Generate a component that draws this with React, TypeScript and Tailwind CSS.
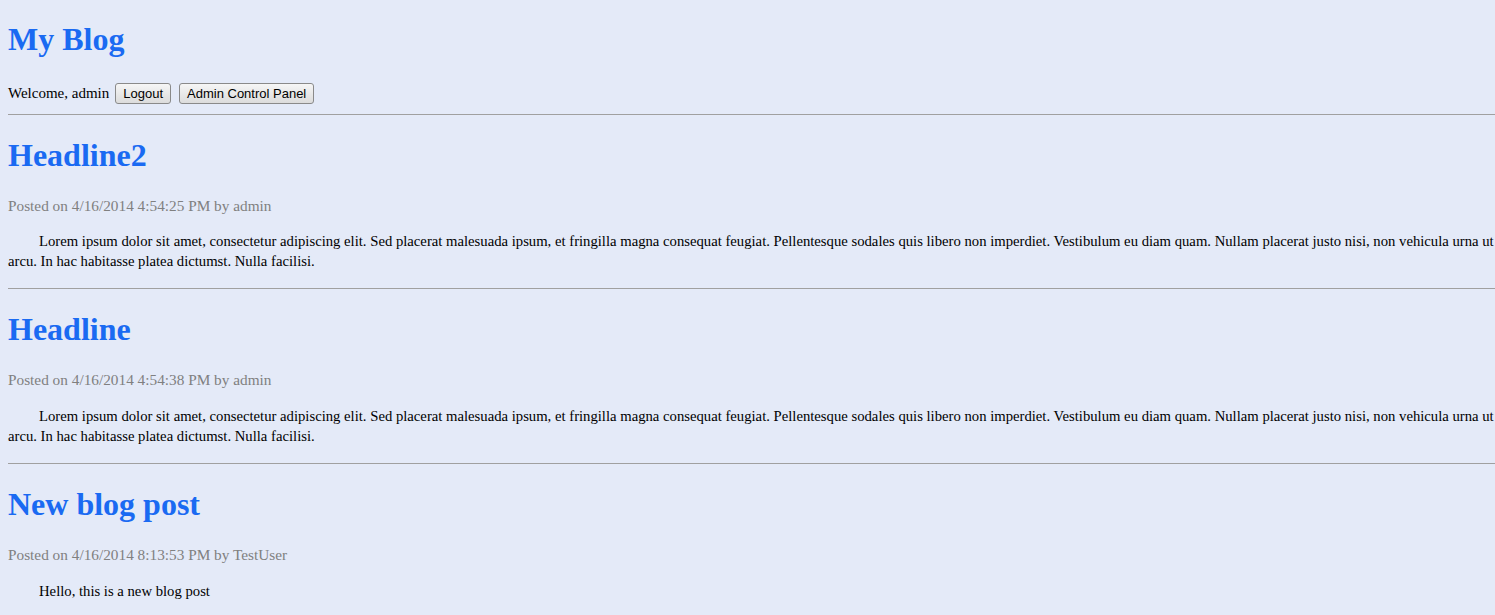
const lorem =
    "Lorem ipsum dolor sit amet, consectetur adipiscing elit. Sed placerat malesuada ipsum, et fringilla magna consequat feugiat. Pellentesque sodales quis libero non imperdiet. Vestibulum eu diam quam. Nullam placerat justo nisi, non vehicula urna ut arcu. In hac habitasse platea dictumst. Nulla facilisi."

const posts = [
    { title: "Headline2", date: "4/16/2014 4:54:25 PM", author: "admin", body: lorem },
    { title: "Headline", date: "4/16/2014 4:54:38 PM", author: "admin", body: lorem },
    { title: "New blog post", date: "4/16/2014 8:13:53 PM", author: "TestUser", body: "Hello, this is a new blog post" },
]

function Button({ children }: { children: string }) {
    return (
        <button className="h-[21px] px-[7px] rounded-[3px] border border-[#8a8a8a] bg-gradient-to-b from-[#f6f6f6] to-[#dcdcdc]
            text-[13px] leading-none text-black font-['Liberation_Sans',Arial,sans-serif]">
            {children}
        </button>
    )
}

export default function App() {
    return (
        <div className="min-h-screen w-full overflow-hidden bg-[#e4eaf8]">
            <div className="w-[1530px] px-2 font-['Liberation_Serif','Times_New_Roman',serif] text-[15px] text-black">
                <h1 className="pt-[21px] text-[32px] leading-[37px] font-bold text-[#1a6af2]">My Blog</h1>
                <div className="mt-[24px] flex items-center">
                    <span>Welcome, admin</span>
                    <div className="ml-[6px] flex gap-[8px]">
                        <Button>Logout</Button>
                        <Button>Admin Control Panel</Button>
                    </div>
                </div>
                <hr className="mt-[9px] border-t border-[#a0a0a0]" />
                {posts.map((post, i) => (
                    <div key={post.title}>
                        <h2 className="mt-[22px] text-[32px] leading-[37px] font-bold text-[#1a6af2]">{post.title}</h2>
                        <p className="mt-[21px] text-[15.3px] text-[#808080]">
                            Posted on {post.date} by {post.author}
                        </p>
                        <p className="mt-[14px] indent-[31px] text-[14.7px] leading-[20px]">{post.body}</p>
                        {i < posts.length - 1 && <hr className="mt-[17px] border-t border-[#a0a0a0]" />}
                    </div>
                ))}
            </div>
        </div>
    )
}
